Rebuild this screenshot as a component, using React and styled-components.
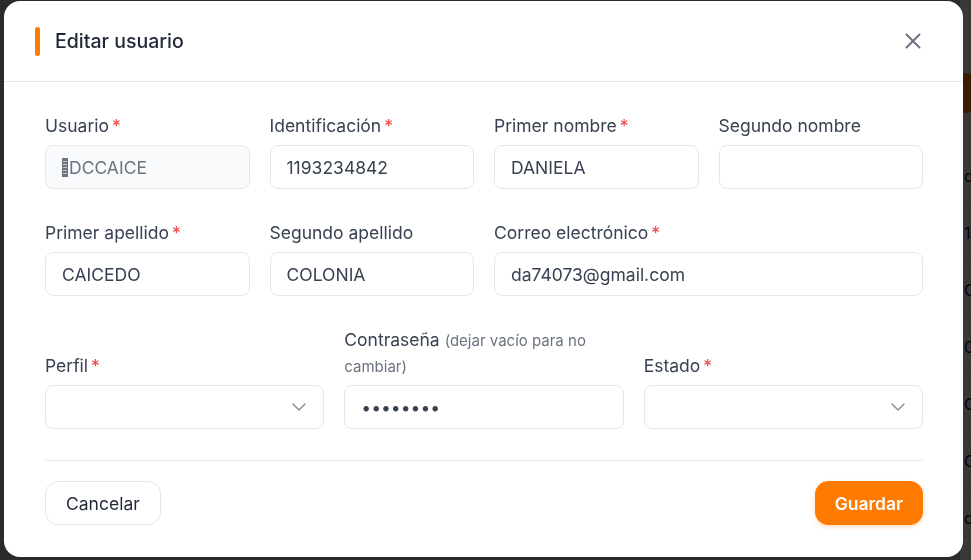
import React from 'react'
import styled, { createGlobalStyle, css } from 'styled-components'
import { X, ChevronDown } from 'lucide-react'

const GlobalStyle = createGlobalStyle`
  * { box-sizing: border-box; }
  body {
    margin: 0;
    font-family: Inter, "Noto Sans", sans-serif;
    background: #fff;
  }
`

/* page behind the dialog */
const Page = styled.div`
  display: flex;
  height: 100vh;
  overflow: hidden;
`

const Sidebar = styled.div`
  width: 960px;
  flex-shrink: 0;
  background: #c4c4c4;
`

const Content = styled.div`
  flex: 1;
  padding-top: 73px;
  background: #fff;
`

const NewButton = styled.div`
  height: 40px;
  border-radius: 0 20px 20px 0;
  background: #ff7a00;
  margin-bottom: 35px;
`

const BgRow = styled.div`
  height: 57px;
  display: flex;
  align-items: center;
  padding-left: 4px;
  border-bottom: 1px solid #e6e6e6;
  font-size: 16px;
  color: #111;
  white-space: nowrap;
`

const Overlay = styled.div`
  position: fixed;
  inset: 0;
  background: rgba(0, 0, 0, 0.78);
  display: flex;
  align-items: flex-start;
  padding: 1px 0 0 4px;
`

/* dialog */
const Modal = styled.div`
  width: 959px;
  background: #fff;
  border-radius: 16px;
  overflow: hidden;
`

const Header = styled.div`
  height: 81px;
  display: flex;
  align-items: center;
  gap: 15px;
  padding: 0 37px 0 31px;
  border-bottom: 1px solid #e5e7eb;
`

const Accent = styled.span`
  width: 5px;
  height: 29px;
  border-radius: 3px;
  background: #ff7a00;
`

const Title = styled.h2`
  flex: 1;
  margin: 0;
  font-size: 19.5px;
  font-weight: 500;
  color: #1f2937;
`

const CloseButton = styled.button`
  display: flex;
  padding: 0;
  border: 0;
  background: none;
  color: #6b7280;
  cursor: pointer;
`

const Body = styled.div`
  padding: 31px 40px 32px 41px;
  display: flex;
  flex-direction: column;
  gap: 31px;
`

const Grid = styled.div`
  display: grid;
  grid-template-columns: repeat(${p => p.$cols}, 1fr);
  column-gap: 20px;
  row-gap: 31px;
  align-items: end;
`

const Field = styled.div`
  display: flex;
  flex-direction: column;
  gap: 6px;
  min-width: 0;
  grid-column: span ${p => p.$span || 1};
`

const Label = styled.label`
  font-size: 17.5px;
  line-height: 26px;
  color: #374151;
`

const Required = styled.span`
  color: #ef4444;
  margin-left: 3px;
`

const Hint = styled.span`
  font-size: 15px;
  line-height: 1;
  color: #6b7280;
`

const fieldBox = css`
  height: 44px;
  width: 100%;
  border: 1px solid #e5e7eb;
  border-radius: 8px;
  padding: 0 16px;
  font-family: Inter, "Noto Sans", sans-serif;
  font-size: 17.5px;
  color: #374151;
  background: #fff;
`

const Input = styled.input`
  ${fieldBox}
  outline: none;
`

const DisabledBox = styled.div`
  ${fieldBox}
  display: flex;
  align-items: center;
  background: #f8fafc;
  color: #6b7280;
`

const Tofu = styled.span`
  display: inline-block;
  width: 6px;
  height: 19px;
  margin-right: 1px;
  background: repeating-linear-gradient(#6b7280 0 2px, #c9ccd2 2px 3px);
  border: 1px solid #6b7280;
`

const SelectBox = styled.div`
  ${fieldBox}
  display: flex;
  align-items: center;
  justify-content: flex-end;
  padding-right: 12px;
  color: #8b9099;
`

const Footer = styled.div`
  display: flex;
  justify-content: space-between;
  border-top: 1px solid #e5e7eb;
  padding-top: 20px;
`

const Button = styled.button`
  height: 44px;
  border-radius: 13px;
  font-family: Inter, "Noto Sans", sans-serif;
  font-size: 17.5px;
  cursor: pointer;
  ${p => p.$primary
    ? css`
      padding: 0 19px;
      background: #ff7a00;
      border: 1px solid #ff7a00;
      color: #fff;
      font-weight: 600;
      box-shadow: 0 2px 4px rgba(255, 122, 0, 0.25);
    `
    : css`
      padding: 0 20px;
      background: #fff;
      border: 1px solid #e5e7eb;
      color: #1f2937;
    `}
`

function TextField({ label, required, value, span }) {
  return (
    <Field $span={span}>
      <Label>{label}{required && <Required>*</Required>}</Label>
      <Input defaultValue={value} />
    </Field>
  )
}

function SelectField({ label }) {
  return (
    <Field>
      <Label>{label}<Required>*</Required></Label>
      <SelectBox><ChevronDown size={24} strokeWidth={1.5} /></SelectBox>
    </Field>
  )
}

const bgRows = ['d', '1', 'C', '08', 'C', 'C', 'c']

export default function App() {
  return (
    <>
      <GlobalStyle />
      <Page>
        <Sidebar />
        <Content>
          <NewButton />
          {bgRows.map((t, i) => <BgRow key={i}>{t}</BgRow>)}
        </Content>
      </Page>
      <Overlay>
        <Modal>
          <Header>
            <Accent />
            <Title>Editar usuario</Title>
            <CloseButton aria-label="Cerrar"><X size={26} strokeWidth={1.8} /></CloseButton>
          </Header>
          <Body>
            <Grid $cols={4}>
              <Field>
                <Label>Usuario<Required>*</Required></Label>
                <DisabledBox><Tofu />DCCAICE</DisabledBox>
              </Field>
              <TextField label="Identificación" required value="1193234842" />
              <TextField label="Primer nombre" required value="DANIELA" />
              <TextField label="Segundo nombre" value="" />
              <TextField label="Primer apellido" required value="CAICEDO" />
              <TextField label="Segundo apellido" value="COLONIA" />
              <TextField label="Correo electrónico" required value="da74073@gmail.com" span={2} />
            </Grid>
            <Grid $cols={3}>
              <SelectField label="Perfil" />
              <Field>
                <Label>Contraseña <Hint>(dejar vacío para no cambiar)</Hint></Label>
                <Input type="password" defaultValue="12345678" />
              </Field>
              <SelectField label="Estado" />
            </Grid>
            <Footer>
              <Button>Cancelar</Button>
              <Button $primary>Guardar</Button>
            </Footer>
          </Body>
        </Modal>
      </Overlay>
    </>
  )
}
